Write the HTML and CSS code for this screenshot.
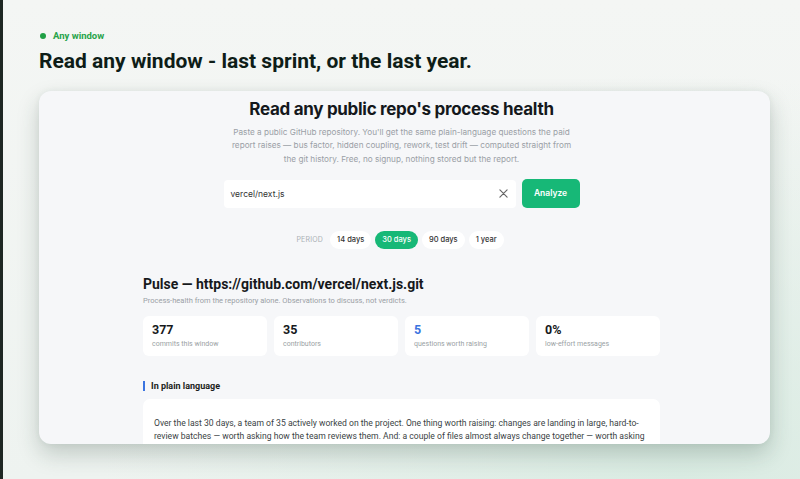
FILE: index.html
```html
<!DOCTYPE html>
<html lang="en">
<head>
  <meta charset="UTF-8">
  <title>Pulse - Any window</title>
  <link rel="stylesheet" href="styles.css">
</head>
<body>

  <div class="page">
    <div class="eyebrow"><span class="dot"></span>Any window</div>
    <h1>Read any window - last sprint, or the last year.</h1>

    <div class="frame">
      <div class="inner">
        <h2 class="hero-title">Read any public repo's process health</h2>
        <p class="hero-sub">Paste a public GitHub repository. You'll get the same plain-language questions the paid report raises — bus factor, hidden coupling, rework, test drift — computed straight from the git history. Free, no signup, nothing stored but the report.</p>

        <div class="search">
          <div class="search-box">
            <span>vercel/next.js</span>
            <svg class="clear" width="9" height="9" viewBox="0 0 10 10">
              <path d="M1 1 L9 9 M9 1 L1 9" stroke="#666" stroke-width="1.3" stroke-linecap="round"/>
            </svg>
          </div>
          <button class="analyze">Analyze</button>
        </div>

        <div class="period">
          <span class="period-label">PERIOD</span>
          <span class="pill">14 days</span>
          <span class="pill active">30 days</span>
          <span class="pill">90 days</span>
          <span class="pill">1 year</span>
        </div>

        <h3 class="pulse-title">Pulse — https://github.com/vercel/next.js.git</h3>
        <p class="pulse-sub">Process-health from the repository alone. Observations to discuss, not verdicts.</p>

        <div class="stats">
          <div class="stat"><div class="num">377</div><div class="lbl">commits this window</div></div>
          <div class="stat"><div class="num">35</div><div class="lbl">contributors</div></div>
          <div class="stat"><div class="num blue">5</div><div class="lbl">questions worth raising</div></div>
          <div class="stat"><div class="num">0%</div><div class="lbl">low-effort messages</div></div>
        </div>

        <h4 class="section">In plain language</h4>
        <div class="summary">
          <p>Over the last 30 days, a team of 35 actively worked on the project. One thing worth raising: changes are landing in large, hard-to-review batches — worth asking how the team reviews them. And: a couple of files almost always change together — worth asking whether they share a hidden dependency.</p>
        </div>
      </div>
    </div>
  </div>

</body>
</html>
```

FILE: styles.css
```css
html, body {
  height: 100%;
}
body {
  margin: 0;
  overflow: hidden;
  border-left: 3px solid #1e2723;
  background:
    radial-gradient(ellipse at 85% 100%, #d9ebe2 0%, rgba(217, 235, 226, 0) 60%),
    linear-gradient(180deg, #f4f6f4 0%, #eef3f0 100%);
  font-family: Roboto, "Liberation Sans", sans-serif;
  color: #15201b;
}
.page {
  padding: 30px 0 0 36px;
}
.eyebrow {
  display: flex;
  align-items: center;
  gap: 7px;
  font-size: 9.5px;
  font-weight: 700;
  color: #27a34a;
  margin-left: 1px;
}
.dot {
  width: 6px;
  height: 6px;
  border-radius: 50%;
  background: #20a045;
}
h1 {
  margin: 8px 0 0;
  font-size: 21px;
  font-weight: 700;
  color: #0e1d17;
}
.frame {
  margin-top: 18px;
  width: 731px;
  height: 353px;
  border-radius: 12px;
  background: #f6f7f9;
  overflow: hidden;
  box-shadow: 0 10px 22px rgba(30, 60, 45, 0.22), 0 0 6px rgba(30, 60, 45, 0.06);
}
.inner {
  width: 517px;
  margin-left: 104px;
  padding-top: 8px;
  text-align: center;
}
.hero-title {
  margin: 0;
  font-family: Inter, sans-serif;
  font-size: 17px;
  font-weight: 700;
  letter-spacing: -0.3px;
  color: #14181c;
}
.hero-sub {
  margin: 7px auto 0;
  width: 346px;
  font-family: Inter, sans-serif;
  font-size: 8.2px;
  line-height: 13.3px;
  color: #9aa0a6;
}
.search {
  display: flex;
  justify-content: center;
  gap: 6px;
  margin-top: 14px;
}
.search-box {
  width: 292px;
  height: 28px;
  box-sizing: border-box;
  padding: 0 8px 0 7px;
  display: flex;
  align-items: center;
  justify-content: space-between;
  background: #fff;
  border-radius: 4px;
  font-family: Inter, sans-serif;
  font-size: 8.5px;
  color: #333;
}
.analyze {
  width: 58px;
  height: 29px;
  border: none;
  border-radius: 5px;
  background: #17b877;
  color: #fff;
  font-family: Inter, sans-serif;
  font-size: 8.5px;
  font-weight: 600;
  margin-top: -1px;
}
.period {
  display: flex;
  justify-content: center;
  align-items: center;
  gap: 4px;
  margin-top: 23px;
  margin-left: -3px;
  font-family: Inter, sans-serif;
}
.period-label {
  font-size: 7px;
  color: #aab0b5;
  margin-right: 3px;
  letter-spacing: 0.2px;
}
.pill {
  padding: 0 7px;
  height: 18px;
  line-height: 18px;
  border-radius: 9px;
  background: #fff;
  font-size: 7.5px;
  font-weight: 500;
  color: #333;
}
.pill.active {
  background: #17b877;
  color: #fff;
}
.pulse-title {
  margin: 27px 0 0;
  text-align: left;
  font-size: 14px;
  font-weight: 700;
  color: #16191c;
}
.pulse-sub {
  margin: 4px 0 0;
  text-align: left;
  font-size: 7.5px;
  color: #9aa0a5;
}
.stats {
  display: grid;
  grid-template-columns: repeat(4, 124px);
  gap: 7px;
  margin-top: 11px;
  text-align: left;
}
.stat {
  height: 40px;
  box-sizing: border-box;
  padding: 6px 9px;
  background: #fff;
  border-radius: 6px;
}
.num {
  font-size: 12.5px;
  font-weight: 700;
  color: #16191c;
}
.num.blue {
  color: #3b74e0;
}
.lbl {
  margin-top: 3px;
  font-size: 7px;
  color: #9a9fa4;
}
.section {
  margin: 25px 0 0;
  padding-left: 6px;
  border-left: 2px solid #3b74e0;
  text-align: left;
  font-size: 9px;
  font-weight: 700;
  line-height: 10px;
  color: #1a1d20;
}
.summary {
  margin-top: 8px;
  background: #fff;
  border-radius: 7px;
  padding: 18px 12px 14px 11px;
  text-align: left;
}
.summary p {
  margin: 0;
  font-size: 8.6px;
  line-height: 13px;
  color: #3a3f44;
}
```
